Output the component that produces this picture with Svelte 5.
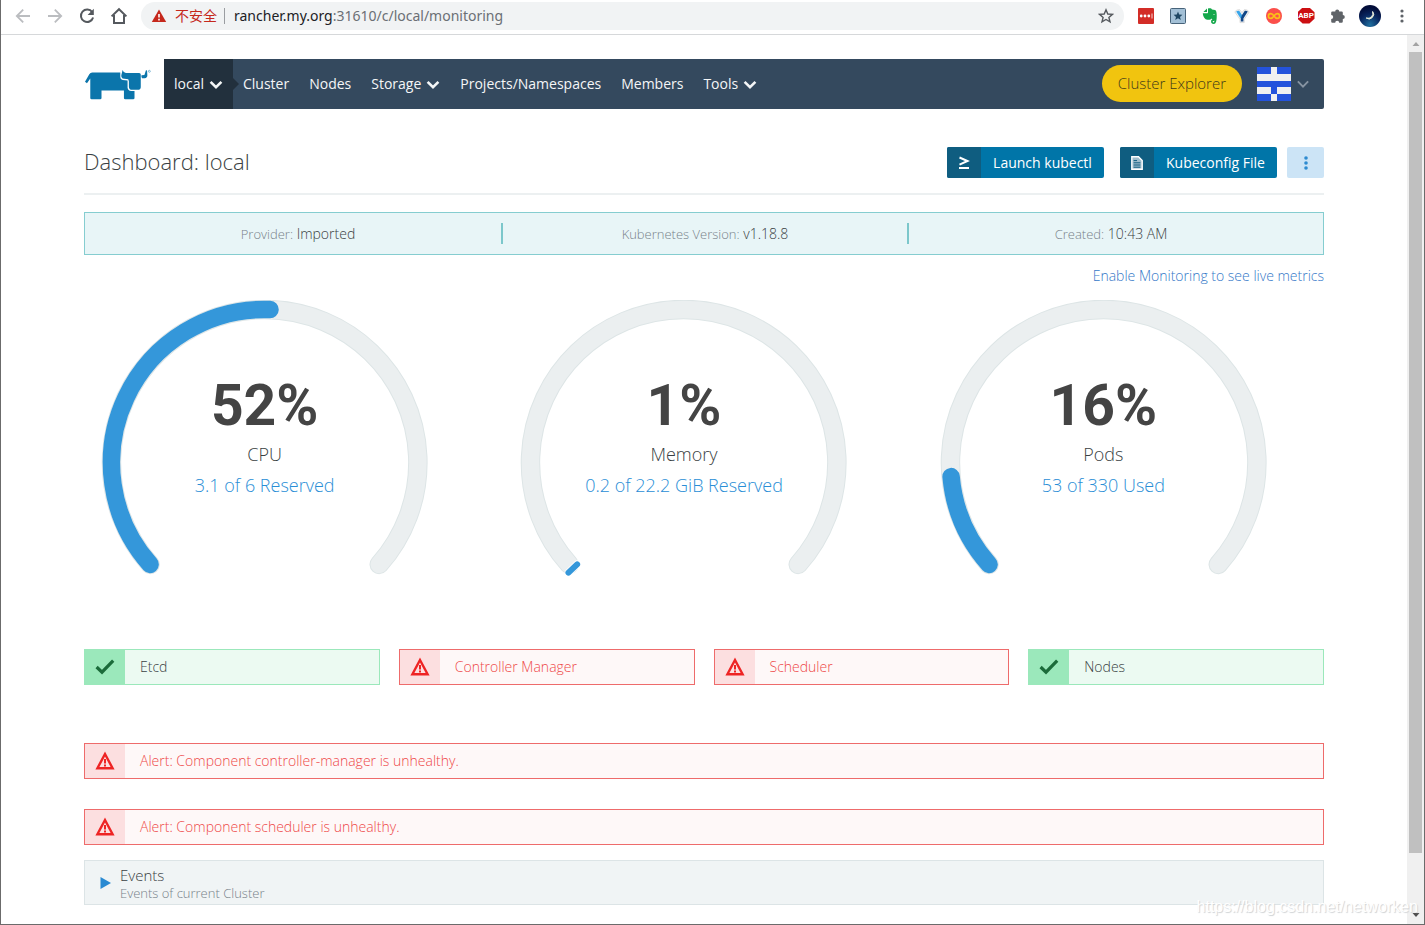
<script>
  const links = [
    { label: 'Cluster' },
    { label: 'Nodes' },
    { label: 'Storage', menu: true },
    { label: 'Projects/Namespaces' },
    { label: 'Members' },
    { label: 'Tools', menu: true },
  ];

  const facts = [
    { label: 'Provider:', value: 'Imported' },
    { label: 'Kubernetes Version:', value: 'v1.18.8' },
    { label: 'Created:', value: '10:43 AM' },
  ];

  const gauges = [
    { name: 'CPU', percent: 52, detail: '3.1 of 6 Reserved' },
    { name: 'Memory', percent: 1, detail: '0.2 of 22.2 GiB Reserved' },
    { name: 'Pods', percent: 16, detail: '53 of 330 Used' },
  ];

  const components = [
    { name: 'Etcd', healthy: true },
    { name: 'Controller Manager', healthy: false },
    { name: 'Scheduler', healthy: false },
    { name: 'Nodes', healthy: true },
  ];

  const alerts = [
    'Alert: Component controller-manager is unhealthy.',
    'Alert: Component scheduler is unhealthy.',
  ];

  // The dial sweeps 270 degrees clockwise, starting at the lower left.
  const CX = 181;
  const CY = 163;
  const R = 153.5;
  const CAP = 3.4;

  function point(angle, radius = R) {
    const a = (angle * Math.PI) / 180;
    return `${(CX + radius * Math.cos(a)).toFixed(2)} ${(CY + radius * Math.sin(a)).toFixed(2)}`;
  }

  function arc(percent) {
    const from = 135 + CAP;
    const to = 135 + percent * 2.7 - CAP;
    return `M${point(from)} A${R} ${R} 0 ${to - from > 180 ? 1 : 0} 1 ${point(to)}`;
  }

  function sliver(percent) {
    const mid = 135 + percent * 1.35;
    return `M${point(mid, R - 6)} L${point(mid, R + 6)}`;
  }

  const identicon = ['11011', '00000', '11111', '00100', '11011'];
</script>

{#snippet chevron()}
  <svg width="14" height="14" viewBox="0 0 14 14" aria-hidden="true">
    <path d="M1.6 4.8 L7 10.2 L12.4 4.8" fill="none" stroke="currentColor" stroke-width="2.6" />
  </svg>
{/snippet}

{#snippet warning()}
  <svg width="20" height="20" viewBox="0 0 20 20" aria-hidden="true">
    <path d="M10 3 L17.6 17.3 H2.4 Z" fill="none" stroke="#ee2424" stroke-width="2.4" />
    <path d="M10 8 V12.4 M10 13.6 V15.4" stroke="#ee2424" stroke-width="2" />
  </svg>
{/snippet}

{#snippet check()}
  <svg width="20" height="20" viewBox="0 0 20 20" aria-hidden="true">
    <path d="M1.6 10 L7 15.2 L18.2 3.6" fill="none" stroke="#1b6b3a" stroke-width="3.2" />
  </svg>
{/snippet}

<div class="window">
  <header class="chrome">
    <div class="tools">
      <button class="dim" aria-label="Back">
        <svg width="16" height="16" viewBox="0 0 16 16"><path d="M15 8 H2 M8.2 1.6 L1.8 8 L8.2 14.4" fill="none" stroke="currentColor" stroke-width="1.8" /></svg>
      </button>
      <button class="dim" aria-label="Forward">
        <svg width="16" height="16" viewBox="0 0 16 16"><path d="M1 8 H14 M7.8 1.6 L14.2 8 L7.8 14.4" fill="none" stroke="currentColor" stroke-width="1.8" /></svg>
      </button>
      <button aria-label="Reload">
        <svg width="16" height="16" viewBox="0 0 16 16"><path d="M13.2 4.2 A6.2 6.2 0 1 0 14.1 9.5" fill="none" stroke="currentColor" stroke-width="2" /><path d="M14.8 0.8 V7 H8.6 Z" fill="currentColor" /></svg>
      </button>
      <button aria-label="Home">
        <svg width="18" height="18" viewBox="0 0 18 18"><path d="M1.6 9.4 L9 2.2 L16.4 9.4 M4 8 V16 H14 V8" fill="none" stroke="currentColor" stroke-width="2" /></svg>
      </button>
    </div>
    <div class="address">
      <svg width="16" height="14" viewBox="0 0 16 14" aria-hidden="true"><path d="M8 0.5 L15.2 13 H0.8 Z" fill="#c5281c" /><path d="M8 5 V8.6 M8 9.8 V11.4" stroke="#fff" stroke-width="1.6" /></svg>
      <span class="insecure">不安全</span>
      <span class="bar"></span>
      <span class="url"><b>rancher.my.org</b>:31610/c/local/monitoring</span>
      <button class="star" aria-label="Bookmark">
        <svg width="16" height="16" viewBox="0 0 16 16"><path d="M8 1.8 L9.8 6 L14.4 6.4 L10.9 9.4 L12 13.9 L8 11.5 L4 13.9 L5.1 9.4 L1.6 6.4 L6.2 6 Z" fill="none" stroke="currentColor" stroke-width="1.4" /></svg>
      </button>
    </div>
    <div class="tools">
      <button aria-label="Password manager">
        <svg width="16" height="16" viewBox="0 0 16 16"><rect width="16" height="16" rx="1" fill="#d32d27" /><circle cx="3.2" cy="8" r="1.4" fill="#fff" /><circle cx="7" cy="8" r="1.4" fill="#fff" /><circle cx="10.8" cy="8" r="1.4" fill="#fff" /><path d="M14 5.5 V10.5" stroke="#fff" stroke-width="0.8" /></svg>
      </button>
      <button aria-label="Bookmarks extension">
        <svg width="16" height="16" viewBox="0 0 16 16"><rect x="0.5" y="0.5" width="15" height="15" rx="1" fill="#a3c0d6" stroke="#47637a" /><path d="M8 3.6 L9.2 6.6 L12.4 6.8 L10 8.9 L10.8 12 L8 10.3 L5.2 12 L6 8.9 L3.6 6.8 L6.8 6.6 Z" fill="#1f4763" /></svg>
      </button>
      <button aria-label="Web clipper">
        <svg width="16" height="16" viewBox="0 0 16 16"><path d="M5 0.4 V4 H1.4 Z M6 0.6 C8 0 9.5 0.4 10 1.6 L13 2.1 C14.4 2.5 15 6 14.7 9.5 C14.5 13 14 16 11.8 16 C9.6 16 8.9 14.6 9.1 13 C9.3 11.8 10.4 11.4 12 11.7 V13 C11 12.8 10.6 13 10.7 13.8 C10.9 14.8 12.4 14.6 12.4 13 C12.3 11.5 10.2 11.8 9.3 10.5 C8.8 11.8 7.4 12 5.4 11.8 C3 11.5 1 8.6 0.8 5.2 H5 C5.8 5.2 6 4.8 6 4.2 Z" fill="#14a84b" /><path d="M10.8 6.8 Q12 5.5 13.2 7 Q12 6.8 10.8 6.8 Z" fill="#fff" /></svg>
      </button>
      <button aria-label="Video helper">
        <svg width="16" height="16" viewBox="0 0 16 16"><path d="M0.8 4 Q2 1.4 5.6 1.6 L8 4.6 L10.4 1.6 Q14 1.4 15.2 4 L10.2 11.4 V14.6 H6 V11.4 Z" fill="#f4f4f4" stroke="#c9c9c9" stroke-width="0.6" /><path d="M2.2 3.6 Q3.4 2.4 5.2 2.8 L8 7 V10.6 L6.4 10.2 Z" fill="#39a6ea" /><path d="M8 7 L10.8 2.8 Q12.6 2.4 13.8 3.6 L9.4 10.4 V13.4 H6.8 V10.4 Z" fill="#124787" /></svg>
      </button>
      <button aria-label="Infinity tab">
        <svg width="16" height="16" viewBox="0 0 16 16"><circle cx="8" cy="8" r="8" fill="#fb4f4b" /><path d="M8 8 C6.6 5.9 5.6 5.6 4.8 5.6 A2.4 2.4 0 0 0 4.8 10.4 C5.6 10.4 6.6 10.1 8 8 C9.4 5.9 10.4 5.6 11.2 5.6 A2.4 2.4 0 0 1 11.2 10.4 C10.4 10.4 9.4 10.1 8 8 Z" fill="none" stroke="#fbc016" stroke-width="1.6" /></svg>
      </button>
      <button aria-label="Ad blocker" class="abp"><span>ABP</span></button>
      <button aria-label="Extensions">
        <svg width="16" height="16" viewBox="0 0 16 16"><path d="M5.2 3.4 A2 2 0 0 1 9.2 3.4 H11.6 A1.2 1.2 0 0 1 12.8 4.6 V7 A2 2 0 0 1 12.8 11 V13.6 A1.2 1.2 0 0 1 11.6 14.8 H9.2 A2 2 0 0 0 5.2 14.8 H2.4 A1.2 1.2 0 0 1 1.2 13.6 V11 A2 2 0 0 0 1.2 7 V4.6 A1.2 1.2 0 0 1 2.4 3.4 Z" fill="#5f6368" /></svg>
      </button>
      <button aria-label="Profile">
        <svg width="22" height="22" viewBox="0 0 22 22"><defs><radialGradient id="night" cx="0.5" cy="0.9" r="0.8"><stop offset="0" stop-color="#1f6f9f" /><stop offset="0.6" stop-color="#08245c" /><stop offset="1" stop-color="#020c38" /></radialGradient></defs><circle cx="11" cy="11" r="11" fill="url(#night)" /><path d="M13.6 6.5 A4.6 4.6 0 0 1 7.2 13 A5 5 0 0 0 13.6 6.5 Z" fill="#e9edda" stroke="#e9edda" stroke-width="1" /></svg>
      </button>
      <button aria-label="Browser menu">
        <svg width="16" height="16" viewBox="0 0 16 16" fill="#5f6368"><circle cx="8" cy="3" r="1.6" /><circle cx="8" cy="8" r="1.6" /><circle cx="8" cy="13" r="1.6" /></svg>
      </button>
    </div>
  </header>

  <div class="viewport">
    <main>
      <div class="top">
        <a class="logo" href="#home" aria-label="Rancher">
          <svg width="68" height="33" viewBox="42 52 204 100" fill="#0b75ab">
            <path d="M44 94 L57 71 Q60 66 66 66 H151 V80 Q151 87 158 88 L173 90 V112 Q174 121 184 122 H194 V143 Q194 147 190 147 H166 Q162 147 162 143 V120 H94 V143 Q94 147 90 147 H64 Q60 147 60 143 V84 L50 98 Z" />
            <path d="M158 58 Q160 66 168 67 H208 Q213 67 213 72 V110 Q212 118 204 118 H184 Q177 117 177 108 V92 L175 86 L158 84 Q153 82 154 74 Z" />
            <path d="M229 58 L232 60 L233 74 Q233 82 225 83 H217 Q214 83 215 74 L224 73 Z" />
            <circle cx="239" cy="62" r="3" fill="none" stroke="#0b75ab" stroke-width="1.4" />
          </svg>
        </a>
        <nav>
          <button class="scope">local {@render chevron()}</button>
          {#each links as link}
            {#if link.menu}
              <button class="link">{link.label} {@render chevron()}</button>
            {:else}
              <a class="link" href="#{link.label}">{link.label}</a>
            {/if}
          {/each}
          <a class="explorer" href="#explorer">Cluster Explorer</a>
          <button class="user" aria-label="User menu">
            <svg width="34" height="34" viewBox="0 0 5 5" shape-rendering="crispEdges">
              <rect width="5" height="5" fill="#f0f0f0" />
              {#each identicon as row, y}
                {#each row as cell, x}
                  {#if cell === '1'}<rect {x} {y} width="1" height="1" fill="#2453dc" />{/if}
                {/each}
              {/each}
            </svg>
            <svg width="12" height="12" viewBox="0 0 14 14"><path d="M1 4 L7 10 L13 4" fill="none" stroke="#8794a2" stroke-width="2.2" /></svg>
          </button>
        </nav>
      </div>

      <div class="heading">
        <h1>Dashboard: local</h1>
        <button class="action first">
          <span class="icon"><svg width="12" height="14" viewBox="0 0 12 14"><path d="M1.5 1.5 L9.5 5 L1.5 8.6" fill="none" stroke="#fff" stroke-width="2" /><path d="M1 12 H11" stroke="#fff" stroke-width="2" /></svg></span>
          <span class="text">Launch kubectl</span>
        </button>
        <button class="action">
          <span class="icon"><svg width="12" height="14" viewBox="0 0 12 14"><path d="M0.8 0.8 H7.5 L11.2 4.5 V13.2 H0.8 Z" fill="#9fbdcc" stroke="#fff" stroke-width="1.4" /><path d="M2.6 4.6 H6 M2.6 6.8 H9.4 M2.6 9 H9.4 M2.6 11.2 H9.4" stroke="#0f5d80" stroke-width="1" /></svg></span>
          <span class="text">Kubeconfig File</span>
        </button>
        <button class="more" aria-label="More actions">
          <svg width="6" height="14" viewBox="0 0 6 14" fill="#2e8bd0"><circle cx="3" cy="2" r="1.8" /><circle cx="3" cy="7" r="1.8" /><circle cx="3" cy="12" r="1.8" /></svg>
        </button>
      </div>

      <section class="facts">
        {#each facts as fact}
          <div><small>{fact.label}</small> {fact.value}</div>
        {/each}
      </section>

      <a class="metrics" href="#monitoring">Enable Monitoring to see live metrics</a>

      <section class="gauges">
        {#each gauges as gauge}
          <div class="gauge">
            <svg viewBox="0 0 362 290" fill="none" stroke-linecap="round" aria-hidden="true">
              <path d={arc(100)} stroke="#dde5e6" stroke-width="19.5" />
              <path d={arc(100)} stroke="#ebeff0" stroke-width="17.5" />
              {#if gauge.percent * 2.7 > CAP * 2}
                <path d={arc(gauge.percent)} stroke="#3497da" stroke-width="17.5" />
              {:else}
                <path d={sliver(gauge.percent)} stroke="#fff" stroke-width="7.5" />
                <path d={sliver(gauge.percent)} stroke="#3497da" stroke-width="6" />
              {/if}
            </svg>
            <div class="reading">
              <strong>{gauge.percent}%</strong>
              <span>{gauge.name}</span>
              <a href="#{gauge.name}">{gauge.detail}</a>
            </div>
          </div>
        {/each}
      </section>

      <section class="components">
        {#each components as item}
          <div class="status" class:bad={!item.healthy}>
            <span class="mark">{#if item.healthy}{@render check()}{:else}{@render warning()}{/if}</span>
            <span class="label">{item.name}</span>
          </div>
        {/each}
      </section>

      <section class="alerts">
        {#each alerts as text}
          <div class="status bad">
            <span class="mark">{@render warning()}</span>
            <span class="label">{text}</span>
          </div>
        {/each}
      </section>

      <button class="events">
        <svg width="11" height="12" viewBox="0 0 11 12" aria-hidden="true"><path d="M0.5 0 L11 6 L0.5 12 Z" fill="#2a8ad2" /></svg>
        <span class="lines"><span>Events</span><small>Events of current Cluster</small></span>
      </button>
    </main>

    <div class="scroll" aria-hidden="true">
      <svg width="8" height="17" viewBox="0 0 8 17"><path d="M0.5 11 L4 7 L7.5 11 Z" fill="#a3a3a3" /></svg>
      <div class="track"><div class="thumb"></div></div>
      <svg width="8" height="17" viewBox="0 0 8 17"><path d="M0.5 6 L4 10 L7.5 6 Z" fill="#505050" /></svg>
    </div>
  </div>
  <div class="watermark">https://blog.csdn.net/networken</div>
</div>

<style>
  :global(body) {
    margin: 0;
    background: #fff;
  }

  .window {
    position: relative;
    display: flex;
    flex-direction: column;
    box-sizing: border-box;
    height: 100vh;
    overflow: hidden;
    border: 1px solid #6b6b6b;
    border-top: 0;
    background: #fff;
    color: #3a3f43;
    font: 300 14px/20px 'Open Sans', 'Noto Sans CJK SC', sans-serif;
  }

  button {
    padding: 0;
    border: 0;
    background: none;
    color: inherit;
    font: inherit;
    cursor: pointer;
  }

  a {
    color: inherit;
    text-decoration: none;
  }

  svg {
    display: block;
    flex: none;
  }

  /* Browser bar */
  .chrome {
    display: flex;
    flex: none;
    align-items: center;
    gap: 10px;
    box-sizing: border-box;
    height: 35px;
    padding: 0 10px 3px;
    border-bottom: 1px solid #d6d8da;
  }

  .tools {
    display: flex;
    gap: 8px;
    color: #55595e;
  }

  .tools button {
    display: grid;
    place-items: center;
    width: 24px;
    height: 24px;
  }

  .tools .dim {
    color: #bbbdc0;
  }

  .tools .abp {
    color: #fff;
    font: 700 8px/16px Roboto, sans-serif;
  }

  .abp span {
    width: 17px;
    height: 16px;
    background: #cc0f12;
    clip-path: polygon(30% 0, 70% 0, 100% 30%, 100% 70%, 70% 100%, 30% 100%, 0 70%, 0 30%);
  }

  .address {
    display: flex;
    flex: 1;
    align-items: center;
    height: 28px;
    padding: 0 10px;
    border-radius: 14px;
    background: #f1f3f4;
    color: #6b6f74;
    font: 400 14px/20px 'Noto Sans', 'Noto Sans CJK SC', sans-serif;
  }

  .insecure {
    margin-left: 8px;
    color: #c5281c;
  }

  .bar {
    width: 1px;
    height: 16px;
    margin: 0 9px 0 7px;
    background: #9a9da1;
  }

  .url {
    flex: 1;
  }

  .url b {
    color: #202124;
    font-weight: 400;
  }

  .star {
    color: #55595e;
  }

  /* Page */
  .viewport {
    display: flex;
    flex: 1;
    min-height: 0;
  }

  main {
    flex: 1;
    min-width: 0;
    max-width: 1240px;
    margin: 0 auto;
    padding-top: 24px;
  }

  .top {
    display: flex;
    align-items: center;
    gap: 12px;
  }

  nav {
    display: flex;
    flex: 1;
    align-items: center;
    height: 50px;
    border-radius: 2px;
    background: #34495e;
    color: #f4f6f7;
    font-weight: 400;
  }

  .scope,
  .link {
    display: flex;
    align-items: center;
    gap: 5px;
    padding: 0 10px;
    white-space: nowrap;
  }

  .scope {
    position: relative;
    height: 50px;
    background: #22303d;
  }

  .scope::after {
    content: '';
    position: absolute;
    top: 19px;
    left: 100%;
    border: 6px solid transparent;
    border-left-color: #22303d;
    border-right: 0;
  }

  .explorer {
    margin: 0 0 1px auto;
    padding: 8px 16px;
    border-radius: 19px;
    background: #f1c40f;
    color: #3f3a1a;
    font-size: 15px;
    font-weight: 300;
    line-height: 21px;
    white-space: nowrap;
  }

  .user {
    display: flex;
    align-items: center;
    gap: 6px;
    padding: 0 15px;
  }

  .heading {
    display: flex;
    align-items: center;
    margin-top: 38px;
    padding-bottom: 15px;
    border-bottom: 2px solid #ecf0f1;
  }

  h1 {
    flex: 1;
    margin: 0;
    padding-bottom: 4px;
    font-size: 22px;
    font-weight: 300;
    line-height: 26px;
  }

  .action {
    display: flex;
    align-items: center;
    width: 157px;
    height: 31px;
    overflow: hidden;
    border-radius: 2px;
    background: #0075a8;
    color: #fff;
    font-weight: 400;
  }

  .first {
    margin-right: 16px;
  }

  .icon {
    display: grid;
    place-items: center;
    width: 34px;
    height: 31px;
    background: #0f5d80;
  }

  .text {
    flex: 1;
    white-space: nowrap;
  }

  .more {
    display: grid;
    place-items: center;
    width: 37px;
    height: 31px;
    margin-left: 10px;
    border-radius: 2px;
    background: #cce4f6;
  }

  .facts {
    display: grid;
    grid-template-columns: repeat(3, 1fr);
    margin-top: 17px;
    padding: 10px;
    border: 1px solid #85cdd0;
    background: #e8f5f7;
    text-align: center;
  }

  .facts div + div {
    border-left: 2px solid #7cc7cb;
  }

  .facts div {
    line-height: 21px;
  }

  small {
    color: #78828a;
    font-size: 13px;
    line-height: 16px;
  }

  .metrics {
    display: block;
    margin-top: 11px;
    color: #3478c8;
    text-align: right;
  }

  .gauges {
    display: grid;
    grid-template-columns: repeat(3, 1fr);
    gap: 58px;
    margin-top: 14px;
    padding-right: 40px;
  }

  .gauge {
    display: grid;
  }

  .gauge svg,
  .reading {
    grid-area: 1 / 1;
    width: 100%;
  }

  .reading {
    display: flex;
    flex-direction: column;
    align-items: center;
    padding-top: 74px;
    font-size: 18px;
    line-height: 31px;
  }

  .reading strong {
    margin-bottom: 1px;
    color: #444;
    font-family: Roboto, sans-serif;
    font-size: 57px;
    font-weight: 700;
    line-height: 64px;
  }

  .reading a {
    color: #2a8ed6;
  }

  .components {
    display: grid;
    grid-template-columns: repeat(4, 1fr);
    gap: 19px;
    margin-top: 60px;
  }

  .status {
    display: flex;
    align-items: center;
    height: 34px;
    border: 1px solid #9be8bb;
    background: #ecfaf2;
  }

  .status.bad {
    border-color: #ee6b6b;
    background: #fef8f8;
    color: #ee4848;
  }

  .mark {
    display: grid;
    place-items: center;
    width: 40px;
    height: 34px;
    background: #9be8bb;
  }

  .bad .mark {
    background: #fcdfe0;
  }

  .label {
    margin-left: 15px;
  }

  .alerts {
    display: grid;
    gap: 30px;
    margin: 58px 0 15px;
  }

  .events {
    display: flex;
    align-items: center;
    gap: 9px;
    box-sizing: border-box;
    width: 100%;
    height: 45px;
    padding: 0 15px;
    border: 1px solid #dce4e6;
    background: #f0f4f5;
    text-align: left;
  }

  .lines {
    display: grid;
    font-size: 15px;
    line-height: 20px;
  }

  /* Scroll bar */
  .scroll {
    display: flex;
    flex-direction: column;
    align-items: center;
    width: 17px;
    background: #f0f0f0;
  }

  .track {
    flex: 1;
    width: 13px;
  }

  .thumb {
    height: calc(100% - 54px);
    background: #c0c0c0;
  }

  .watermark {
    position: absolute;
    right: 6px;
    bottom: 7px;
    color: #fff;
    font: 400 16px/20px 'Liberation Sans', sans-serif;
    text-shadow: 1px 1px 1px #cfd2d4;
  }
</style>
